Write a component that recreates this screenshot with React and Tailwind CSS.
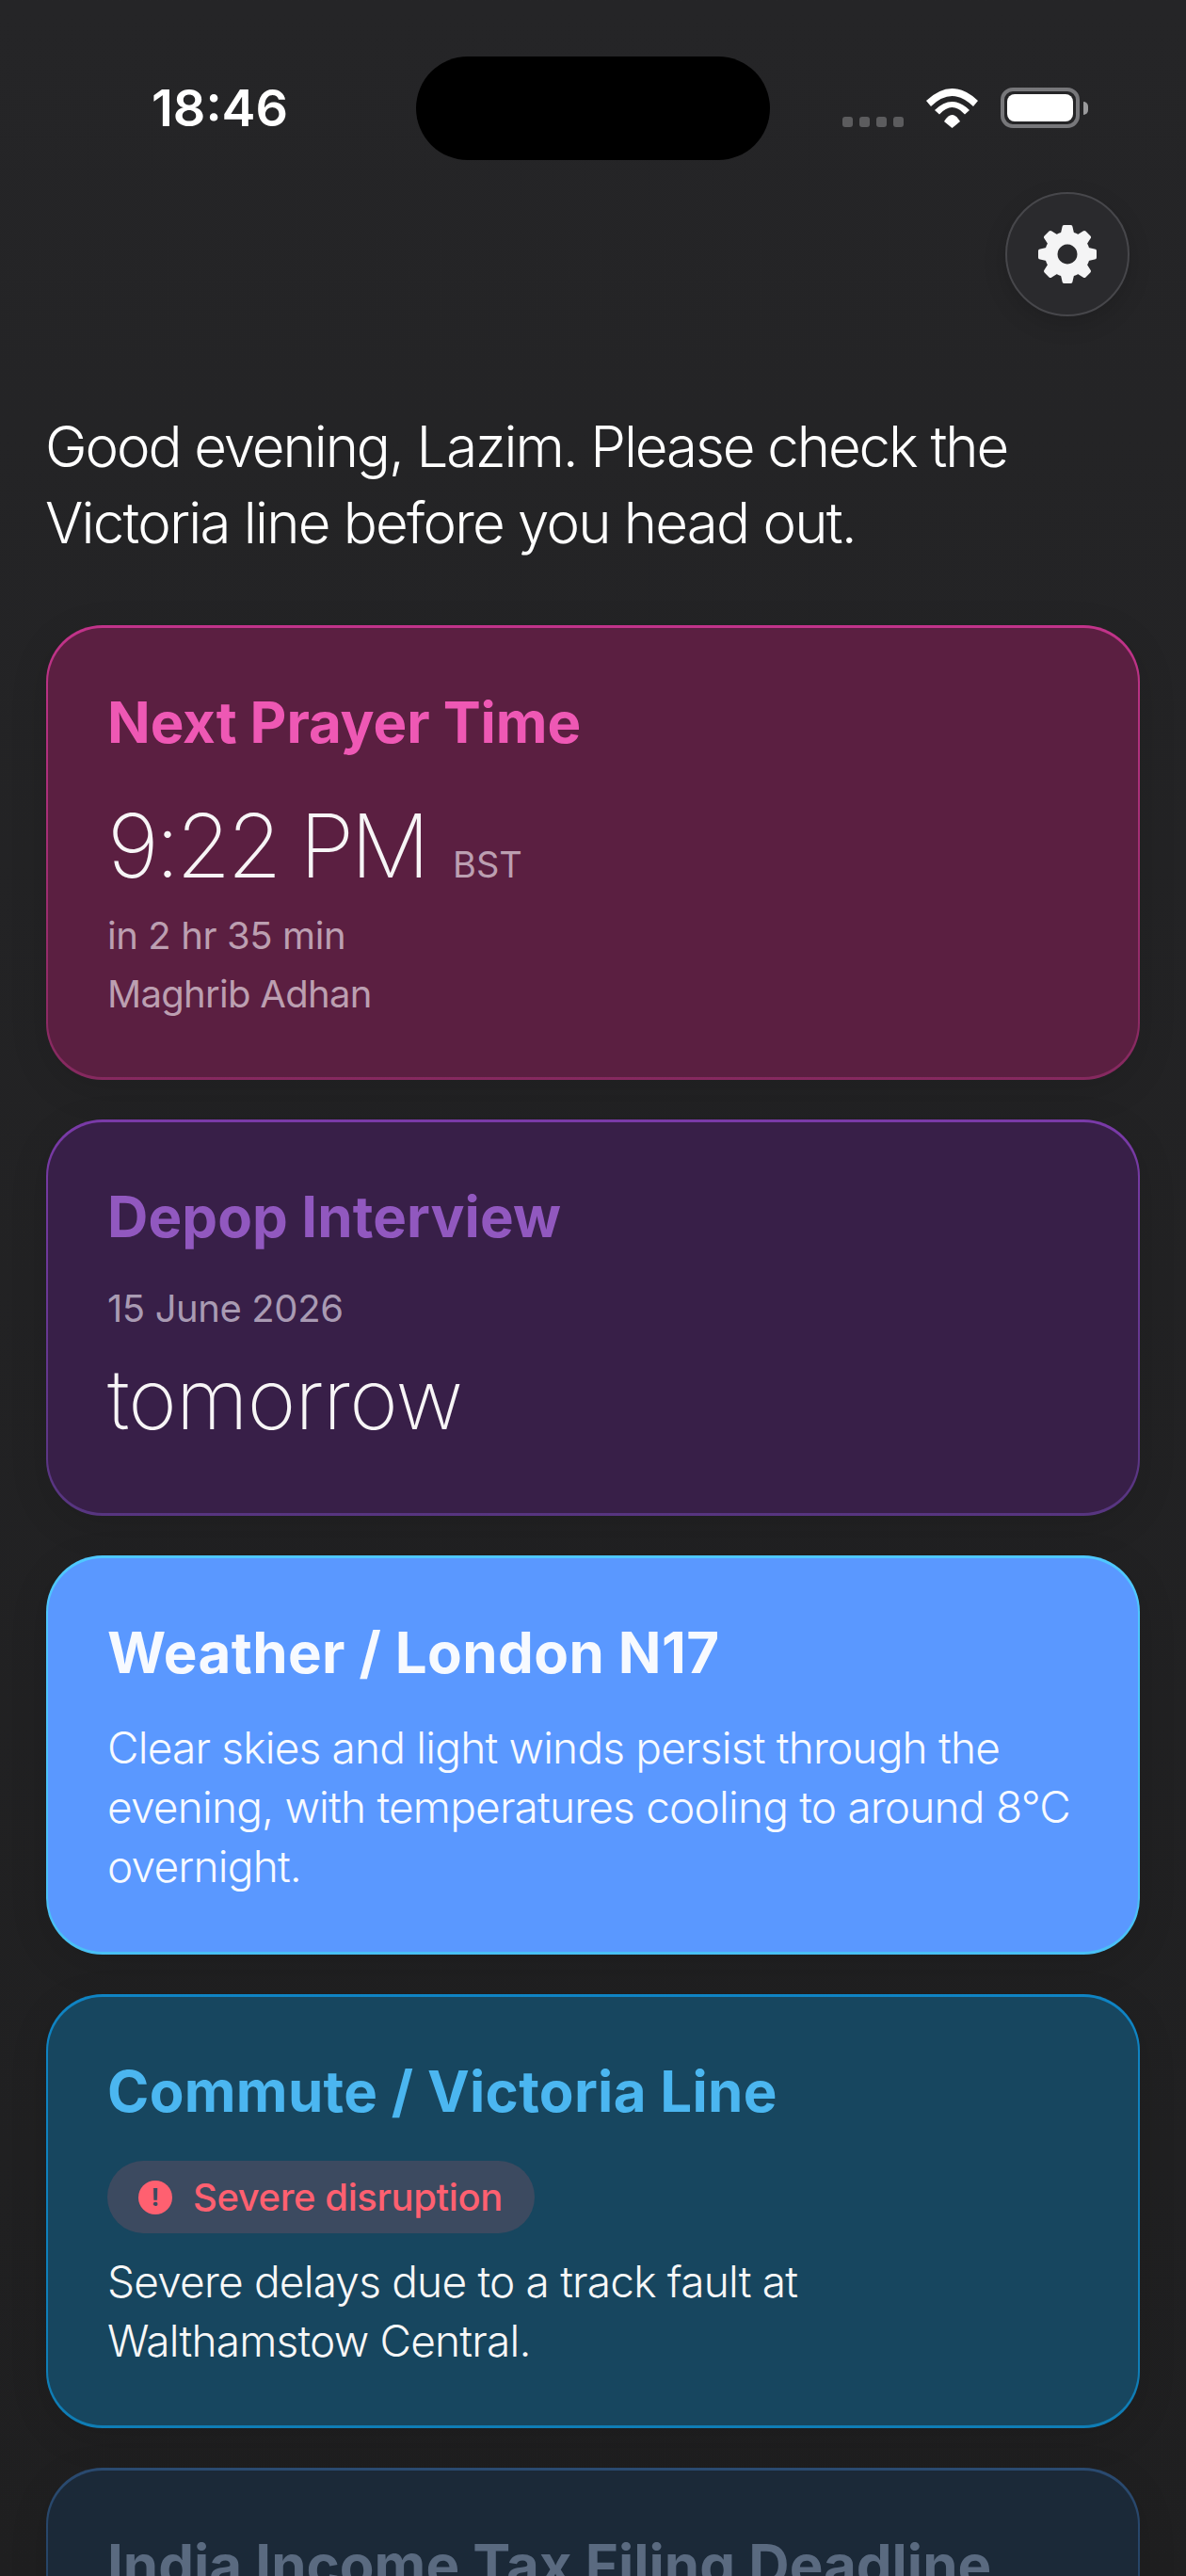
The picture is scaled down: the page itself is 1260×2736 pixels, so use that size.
import React from "react";

const teeth = [0, 45, 90, 135, 180, 225, 270, 315];

function Gear() {
  return (
    <svg width="64" height="64" viewBox="0 0 64 64" fill="#f4f4f5">
      {teeth.map((deg) => (
        <path
          key={deg}
          transform={`rotate(${deg} 32 32)`}
          d="M26.5 3 Q26.5 1 28.5 1 L35.5 1 Q37.5 1 37.5 3 L40 14 L24 14 Z"
        />
      ))}
      <path
        fillRule="evenodd"
        d="M32 8 a24 24 0 1 0 0.01 0 Z M32 21.5 a10.5 10.5 0 1 1 -0.01 0 Z"
      />
    </svg>
  );
}

function Wifi() {
  return (
    <svg width="57" height="42" viewBox="0 0 57 42" fill="#fff">
      <path d="M1 13 Q28.5 -13 56 13 L51 19 Q28.5 -3 6 19 Z" />
      <path d="M10 23 Q28.5 5 47 23 L42 27.5 Q28.5 12.5 15 27.5 Z" />
      <path d="M20 35 Q28.5 21 37 35 L28.5 42 Z" />
    </svg>
  );
}

function Card({ border, bg, children }) {
  return (
    <div className={`rounded-[60px] px-[2px] py-[3px] shadow-[0_10px_40px_rgba(0,0,0,0.12)] ${border}`}>
      <div className={`rounded-[58px] px-[63px] pt-[64px] ${bg}`}>{children}</div>
    </div>
  );
}

export default function App() {
  return (
    <div className="h-[2736px] w-[1260px] overflow-hidden bg-gradient-to-b from-[#252527] to-[#1f1f20] font-['Inter',sans-serif] text-white">
      {/* Status bar */}
      <div className="flex items-center pl-[161px] pt-[60px]">
        <div className="w-[281px] text-[54px] leading-[110px] font-semibold">18:46</div>
        <div className="h-[110px] w-[376px] rounded-full bg-black" />
        <div className="ml-[77px] flex items-end gap-[23px] self-start pt-[33px]">
          <div className="mb-[1px] flex gap-[7px]">
            <div className="h-[11px] w-[11px] rounded-[3px] bg-[#5c5c5e]" />
            <div className="h-[11px] w-[11px] rounded-[3px] bg-[#5c5c5e]" />
            <div className="h-[11px] w-[11px] rounded-[3px] bg-[#5c5c5e]" />
            <div className="h-[11px] w-[11px] rounded-[3px] bg-[#5c5c5e]" />
          </div>
          <Wifi />
          <div className="flex items-center gap-[4px]">
            <div className="h-[43px] w-[84px] rounded-[13px] border-[4px] border-[#77777a] p-[3px]">
              <div className="h-full w-full rounded-[8px] bg-white" />
            </div>
            <div className="h-[14px] w-[5px] rounded-r-[5px] bg-[#9a9a9c]" />
          </div>
        </div>
      </div>

      {/* Settings */}
      <div className="mt-[34px] flex justify-end pr-[60px]">
        <button className="flex h-[132px] w-[132px] items-center justify-center rounded-full border-[2px] border-[#47474b] bg-[#2a2a2d] shadow-[0_8px_24px_rgba(0,0,0,0.15)]">
          <Gear />
        </button>
      </div>

      <p className="mx-[48px] mt-[98px] text-[60px] leading-[81px] font-[350] tracking-[-2.1px]">
        Good evening, Lazim. Please check the
        <br />
        <span className="tracking-[-1.8px]">Victoria line before you head out.</span>
      </p>

      <div className="mx-[49px] mt-[68px] flex flex-col gap-[42px]">
        <Card border="bg-gradient-to-b from-[#c2338a] to-[#85295f]" bg="bg-[#5b1f41] pb-[57px]">
          <h2 className="text-[60px] leading-[72px] font-bold tracking-[-0.1px] text-[#ee58b4]">Next Prayer Time</h2>
          <div className="mt-[40px] flex items-baseline gap-[28px]">
            <span className="text-[94px] leading-[110px] font-extralight tracking-[-3.8px] text-[#f7f5f6]">9:22 PM</span>
            <span className="text-[38px] leading-none text-[#bc9fb1]">BST</span>
          </div>
          <p className="mt-[10px] text-[40px] leading-[62px] tracking-[-0.4px] text-[#bc9fb1]">in 2 hr 35 min</p>
          <p className="text-[40px] leading-[62px] tracking-[-0.7px] text-[#bc9fb1]">Maghrib Adhan</p>
        </Card>

        <Card border="bg-gradient-to-b from-[#7a3aa8] to-[#573580]" bg="bg-[#381f48] pb-[66px]">
          <h2 className="text-[60px] leading-[72px] font-bold tracking-[0.1px] text-[#9158bf]">Depop Interview</h2>
          <p className="mt-[31px] text-[40px] leading-[62px] tracking-[-0.4px] text-[#a99bb3]">15 June 2026</p>
          <p className="mt-[10px] text-[88px] leading-[110px] font-extralight tracking-[-0.8px] text-[#f7f5f6]">tomorrow</p>
        </Card>

        <Card border="bg-gradient-to-b from-[#4fc8ff] to-[#49c0f5]" bg="bg-[#5a98ff] pb-[59px]">
          <h2 className="text-[60px] leading-[72px] font-bold tracking-[0.4px] text-[#f7faff]">Weather / London N17</h2>
          <p className="mt-[34px] text-[46px] leading-[63px] font-[350] tracking-[-0.8px] text-[#f7faff]">
            Clear skies and light winds persist through the evening, with temperatures cooling to around 8°C overnight.
          </p>
        </Card>

        <Card border="bg-gradient-to-b from-[#0f84c4] to-[#0f7db5]" bg="bg-[#17465f] pb-[58px]">
          <h2 className="text-[60px] leading-[72px] font-bold tracking-[0.3px] text-[#4bb6f0]">Commute / Victoria Line</h2>
          <div className="mt-[38px] flex h-[77px] w-[454px] items-center gap-[22px] rounded-full bg-[#3c4a60] pl-[33px]">
            <div className="flex h-[36px] w-[36px] items-center justify-center rounded-full bg-[#ff6070] text-[26px] leading-none font-bold text-[#3c4a60]">!</div>
            <span className="text-[40px] font-medium tracking-[-0.4px] text-[#ff6070]">Severe disruption</span>
          </div>
          <p className="mt-[20px] text-[46px] leading-[63px] font-[350] tracking-[-0.8px] text-[#f7f7f7]">
            Severe delays due to a track fault at
            <br />
            Walthamstow Central.
          </p>
        </Card>

        <Card border="bg-gradient-to-b from-[#2a4a70] to-[#234060]" bg="bg-[#1b2938] pb-[58px]">
          <h2 className="text-[60px] leading-[72px] font-bold text-[#5a6a80]">India Income Tax Filing Deadline</h2>
        </Card>
      </div>
    </div>
  );
}
